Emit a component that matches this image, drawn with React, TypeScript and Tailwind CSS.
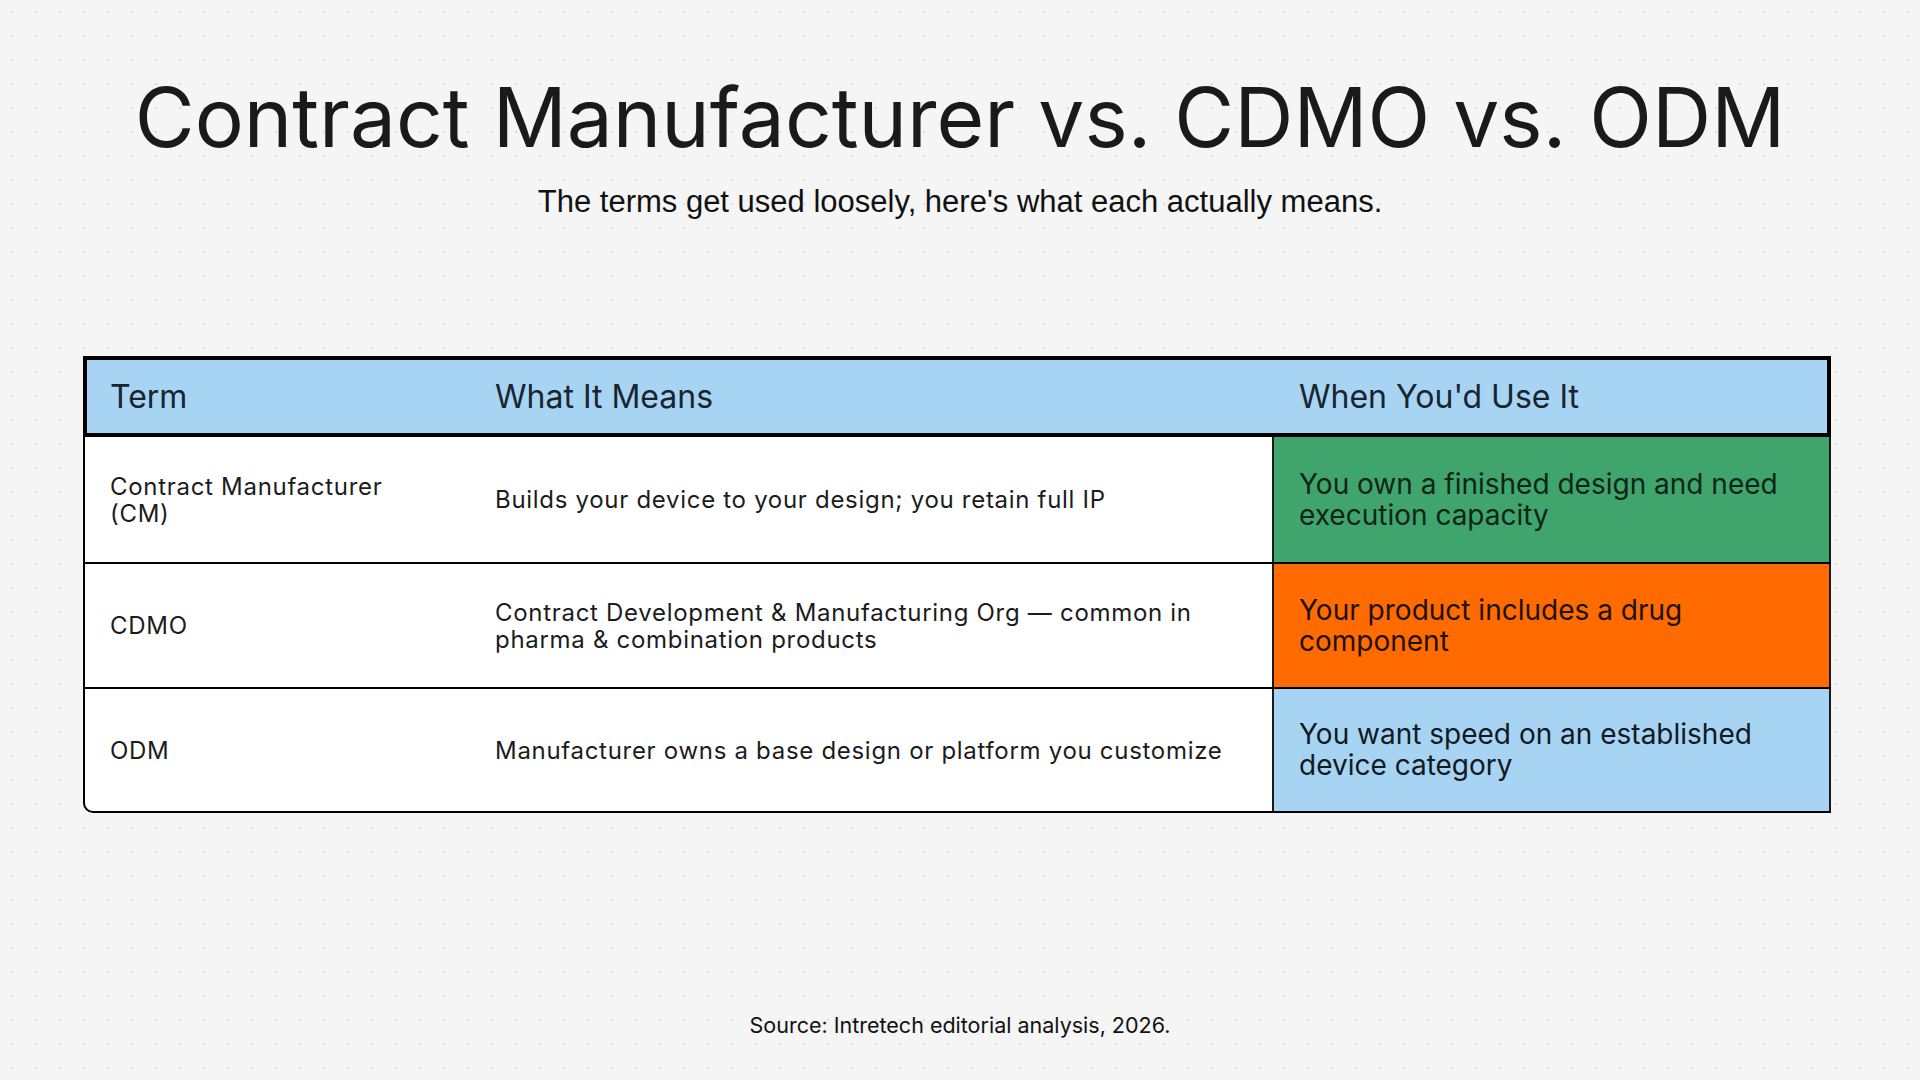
import * as React from "react";

type Row = {
  term: React.ReactNode;
  means: React.ReactNode;
  use: React.ReactNode;
  tone: string;
  height: string;
};

const rows: Row[] = [
  {
    term: (
      <>
        Contract Manufacturer
        <br />
        (CM)
      </>
    ),
    means: "Builds your device to your design; you retain full IP",
    use: (
      <>
        You own a finished design and need
        <br />
        execution capacity
      </>
    ),
    tone: "bg-[#3fa56c] text-[#102418]",
    height: "h-[127px] border-b-2",
  },
  {
    term: "CDMO",
    means: (
      <>
        Contract Development &amp; Manufacturing Org — common in
        <br />
        pharma &amp; combination products
      </>
    ),
    use: (
      <>
        Your product includes a drug
        <br />
        component
      </>
    ),
    tone: "bg-[#ff6b00] text-[#1c1208]",
    height: "h-[125px] border-b-2",
  },
  {
    term: "ODM",
    means: "Manufacturer owns a base design or platform you customize",
    use: (
      <>
        You want speed on an established
        <br />
        device category
      </>
    ),
    tone: "bg-[#a8d4f3] text-[#111a22]",
    height: "h-[122px]",
  },
];

const App = () => {
  return (
    <div className="w-full h-[1080px] overflow-hidden bg-[#f5f5f5] bg-[radial-gradient(circle,#dddddd_1px,transparent_1.6px)] bg-[length:24px_24px] flex flex-col items-center pt-[77px]">
      <h1 className="font-['Inter',sans-serif] text-[82px] leading-none font-normal text-[#1a1a1a] whitespace-nowrap">
        Contract Manufacturer vs. CDMO vs. ODM
      </h1>
      <p className="mt-[27px] font-['Liberation_Sans',Arial,sans-serif] text-[31px] leading-none text-[#111111]">
        The terms get used loosely, here's what each actually means.
      </p>

      <div className="mt-[139px] self-start ml-[83px] w-[1748px] font-['Inter',sans-serif]">
        <div className="h-[81px] border-4 border-black bg-[#a8d4f3] grid grid-cols-[383px_804px_1fr] items-center text-[32px] leading-none text-[#18252f]">
          <div className="pl-[23px]">Term</div>
          <div className="pl-[25px]">What It Means</div>
          <div className="pl-[25px]">When You'd Use It</div>
        </div>

        <div className="bg-white border-l-2 border-b-2 border-black rounded-bl-[10px] overflow-hidden">
          {rows.map((r, i) => (
            <div
              key={i}
              className={`grid grid-cols-[385px_802px_1fr] border-black ${r.height}`}
            >
              <div className="flex items-center pl-[25px] text-[24px] leading-[27px] tracking-[0.7px] text-[#1c1c1c]">
                <span>{r.term}</span>
              </div>
              <div className="flex items-center pl-[25px] text-[24px] leading-[27px] tracking-[0.7px] text-[#1c1c1c] whitespace-nowrap">
                <span>{r.means}</span>
              </div>
              <div
                className={`flex items-center pl-[25px] border-l-2 border-r-2 border-[#1a1a1a] text-[28px] leading-[31px] whitespace-nowrap ${r.tone}`}
              >
                <span>{r.use}</span>
              </div>
            </div>
          ))}
        </div>
      </div>

      <p className="mt-[202px] font-['Inter',sans-serif] text-[21.5px] leading-none text-[#111111]">
        Source: Intretech editorial analysis, 2026.
      </p>
    </div>
  );
};

export default App;
